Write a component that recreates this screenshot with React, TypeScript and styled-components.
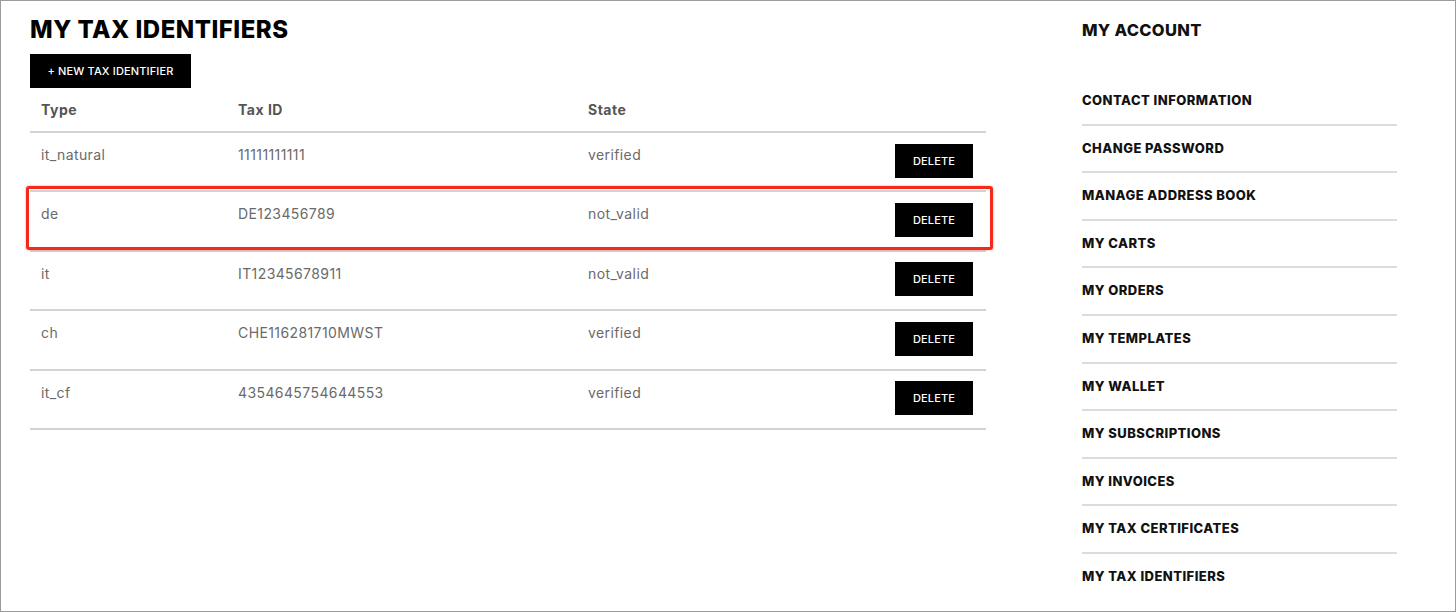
import React from "react";
import styled, { createGlobalStyle } from "styled-components";

const GlobalStyle = createGlobalStyle`
  body {
    margin: 0;
    background: #fff;
    font-family: Inter, "Noto Sans", sans-serif;
  }
`;

const Frame = styled.div`
  box-sizing: border-box;
  width: 1456px;
  height: 612px;
  border: 1px solid #9c9c9c;
  padding: 14px 0 0 29px;
  display: flex;
  gap: 96px;
  overflow: hidden;
`;

const Main = styled.section`
  width: 956px;
  display: flex;
  flex-direction: column;
  align-items: flex-start;
`;

const Title = styled.h1`
  margin: 0 0 9px;
  font-size: 24px;
  line-height: 30px;
  font-weight: 800;
  color: #000;
  letter-spacing: 0.5px;
`;

const BlackButton = styled.button<{ $wide?: boolean }>`
  box-sizing: border-box;
  height: 34px;
  width: ${({ $wide }) => ($wide ? "161px" : "78px")};
  border: 0;
  border-radius: 0;
  background: #000;
  color: #fff;
  font-family: inherit;
  font-size: 11px;
  font-weight: 500;
  letter-spacing: 0.15px;
  text-transform: uppercase;
  padding: 0;
  cursor: pointer;
`;

const Table = styled.div`
  width: 100%;
`;

const Row = styled.div<{ $head?: boolean; $highlight?: boolean }>`
  position: relative;
  box-sizing: border-box;
  height: ${({ $head }) => ($head ? "45px" : "59.4px")};
  display: grid;
  grid-template-columns: 197px 350px 1fr auto;
  align-items: ${({ $head }) => ($head ? "center" : "start")};
  padding: 0 13px 0 11px;
  border-bottom: 2px solid #d3d3d6;

  ${({ $highlight }) =>
    $highlight &&
    `
    &::after {
      content: "";
      position: absolute;
      left: -4px;
      top: -6px;
      right: -7px;
      bottom: 0px;
      border: 3px solid #f5291b;
      border-radius: 3px;
      box-shadow: 0 0 2px rgba(245, 41, 27, 0.6);
      pointer-events: none;
    }
  `}
`;

const HeadCell = styled.div`
  font-size: 14px;
  line-height: 20px;
  font-weight: 700;
  letter-spacing: 0.5px;
  color: #555;
`;

const Cell = styled.div`
  padding-top: 12px;
  font-size: 14px;
  line-height: 20px;
  font-weight: 400;
  letter-spacing: 0.4px;
  color: #6a6a6a;
`;

const ActionCell = styled.div`
  align-self: center;
  display: flex;
  justify-content: flex-end;
  margin-top: -2px;
`;

const Sidebar = styled.aside`
  width: 315px;
  display: flex;
  flex-direction: column;
`;

const SideTitle = styled.h2`
  margin: 4px 0 37px;
  font-size: 16.5px;
  line-height: 22px;
  font-weight: 800;
  letter-spacing: 0.3px;
  color: #111;
`;

const NavItem = styled.a<{ $last?: boolean }>`
  display: block;
  box-sizing: border-box;
  height: 47.6px;
  padding-top: 12px;
  font-size: 13px;
  line-height: 20px;
  font-weight: 800;
  letter-spacing: 0.45px;
  color: #111;
  text-decoration: none;
  text-transform: uppercase;
  border-bottom: 2px solid ${({ $last }) => ($last ? "transparent" : "#dcdcdf")};
`;

type TaxId = { type: string; id: string; state: string };

const rows: TaxId[] = [
  { type: "it_natural", id: "11111111111", state: "verified" },
  { type: "de", id: "DE123456789", state: "not_valid" },
  { type: "it", id: "IT12345678911", state: "not_valid" },
  { type: "ch", id: "CHE116281710MWST", state: "verified" },
  { type: "it_cf", id: "4354645754644553", state: "verified" },
];

const menu = [
  "Contact information",
  "Change password",
  "Manage address book",
  "My carts",
  "My orders",
  "My templates",
  "My wallet",
  "My subscriptions",
  "My invoices",
  "My tax certificates",
  "My tax identifiers",
];

const App = () => {
  return (
    <>
      <GlobalStyle />
      <Frame>
        <Main>
          <Title>MY TAX IDENTIFIERS</Title>
          <BlackButton $wide>+ New tax identifier</BlackButton>
          <Table>
            <Row $head>
              <HeadCell>Type</HeadCell>
              <HeadCell>Tax ID</HeadCell>
              <HeadCell>State</HeadCell>
              <HeadCell />
            </Row>
            {rows.map((r) => (
              <Row key={r.id} $highlight={r.type === "de"}>
                <Cell>{r.type}</Cell>
                <Cell>{r.id}</Cell>
                <Cell>{r.state}</Cell>
                <ActionCell>
                  <BlackButton>Delete</BlackButton>
                </ActionCell>
              </Row>
            ))}
          </Table>
        </Main>
        <Sidebar>
          <SideTitle>MY ACCOUNT</SideTitle>
          {menu.map((m, i) => (
            <NavItem key={m} href="#" $last={i === menu.length - 1}>
              {m}
            </NavItem>
          ))}
        </Sidebar>
      </Frame>
    </>
  );
};

export default App;
